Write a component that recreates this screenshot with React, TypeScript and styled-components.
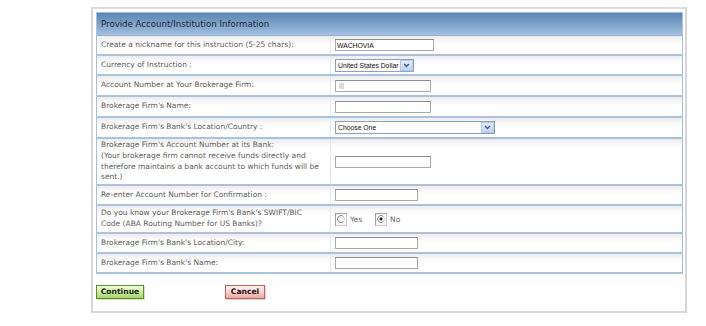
import styled, { createGlobalStyle } from 'styled-components'

const GlobalStyle = createGlobalStyle`
  body {
    margin: 0;
    background: #ffffff;
    font-family: "DejaVu Sans", Verdana, sans-serif;
  }
`

const Page = styled.div`
  width: 706px;
  height: 326px;
  padding: 7px 0 0 91px;
  box-sizing: border-box;
`

const Panel = styled.div`
  width: 596px;
  height: 306px;
  box-sizing: border-box;
  border: 2px solid #d6d6d6;
  border-top-color: #dcdcdc;
  padding: 3px 3px 0 3px;
  background: #ffffff;
`

const FormGrid = styled.div`
  width: 587px;
  box-sizing: border-box;
  border: 1px solid #a7c0dc;
  border-bottom: none;
  font-size: 7.5px;
  color: #5c5c5c;
`

const Header = styled.div`
  height: 23px;
  box-sizing: border-box;
  padding-left: 4px;
  display: flex;
  align-items: center;
  font-size: 8.6px;
  color: #1d2b3d;
  background: linear-gradient(#5a86b4, #8badd1 70%, #a6c2df);
  border-bottom: 1px solid #8fb0d6;
`

const Row = styled.div<{ $h: number }>`
  display: grid;
  grid-template-columns: 234px 1fr;
  height: ${p => p.$h}px;
  box-sizing: border-box;
  border-bottom: 2px solid #a9c2dd;
  background: linear-gradient(#ececec, #fbfbfb 6px, #ffffff 10px);
`

const Label = styled.div`
  padding: 0 9px 0 4px;
  line-height: 10.7px;
  display: flex;
  align-items: center;
  border-right: 1px solid #e2e8ef;
`

const Field = styled.div`
  padding-left: 4px;
  display: flex;
  align-items: center;
`

const TextBox = styled.input<{ $w: number }>`
  display: block;
  width: ${p => p.$w}px;
  height: 12px;
  box-sizing: border-box;
  border: 1px solid #a9a9a9;
  border-top-color: #8e8e8e;
  padding: 0 1px;
  font-family: "Liberation Sans", Arial, sans-serif;
  font-size: 6.8px;
  color: #111111;
  background: #ffffff;
  outline: none;
`

const Masked = styled.span`
  display: block;
  width: 96px;
  height: 12px;
  box-sizing: border-box;
  border: 1px solid #a9a9a9;
  border-top-color: #8e8e8e;
  padding: 2px 3px;
  &::before {
    content: '';
    display: block;
    width: 5px;
    height: 6px;
    background: #dcdcdc;
    filter: blur(0.6px);
  }
`

const SelectBox = styled.div<{ $w: number }>`
  display: flex;
  width: ${p => p.$w}px;
  height: 13px;
  box-sizing: border-box;
  border: 1px solid #8ca2c4;
  background: #ffffff;
  font-family: "Liberation Sans", Arial, sans-serif;
  font-size: 6.8px;
  color: #111111;
`

const SelectValue = styled.span`
  flex: 1;
  padding-left: 2px;
  line-height: 11px;
  white-space: nowrap;
  overflow: hidden;
`

const SelectArrow = styled.span`
  width: 11px;
  display: flex;
  align-items: center;
  justify-content: center;
  border: 1px solid #b5c8e6;
  background: linear-gradient(#e3ecfb, #c3d5f3);
`

const RadioGroup = styled.div`
  display: flex;
  align-items: center;
  font-size: 7.5px;
  color: #666666;
`

const RadioOption = styled.label`
  display: flex;
  align-items: center;
  gap: 3px;
  margin-right: 13px;
`

const RadioBox = styled.span`
  width: 12px;
  height: 13px;
  box-sizing: border-box;
  border: 1px solid #a0a0a0;
  border-right-color: #c8c8c8;
  border-bottom-color: #c8c8c8;
  display: flex;
  align-items: center;
  justify-content: center;
  background: #f7f7f7;
`

const Actions = styled.div`
  display: flex;
  gap: 81px;
  padding: 11px 0 0 0;
`

const Button = styled.button<{ $kind: 'go' | 'stop' }>`
  width: ${p => (p.$kind === 'go' ? 48 : 40)}px;
  height: 14px;
  padding: 0;
  box-sizing: border-box;
  font-family: "DejaVu Sans", Verdana, sans-serif;
  font-weight: bold;
  font-size: 7.6px;
  line-height: 12px;
  cursor: pointer;
  border: 1px solid ${p => (p.$kind === 'go' ? '#5d8f23' : '#c8615b')};
  color: ${p => (p.$kind === 'go' ? '#1a2a0c' : '#2a1010')};
  background: ${p =>
    p.$kind === 'go'
      ? 'linear-gradient(#f3fbe2, #cde9a0 55%, #a6d466)'
      : 'linear-gradient(#fff4f3, #f7cfcc 55%, #eea7a3)'};
  box-shadow: 1px 1px 0 rgba(0, 0, 0, 0.15);
`

const Chevron = () => (
  <svg width="7" height="5" viewBox="0 0 7 5">
    <path d="M1 1 L3.5 3.5 L6 1" fill="none" stroke="#3d5f97" strokeWidth="1.4" />
  </svg>
)

const RadioMark = ({ checked }: { checked?: boolean }) => (
  <svg width="8" height="8" viewBox="0 0 8 8">
    <path d="M6.5 1.5 A3.5 3.5 0 1 0 6.5 6.5" fill="none" stroke="#8a8a8a" strokeWidth="1" />
    <path d="M6.5 1.5 A3.5 3.5 0 0 1 6.5 6.5" fill="none" stroke="#e0e0e0" strokeWidth="1" />
    {checked && <circle cx="4" cy="4" r="1.4" fill="#111111" />}
  </svg>
)

export default function App() {
  return (
    <Page>
      <GlobalStyle />
      <Panel>
        <FormGrid>
          <Header>Provide Account/Institution Information</Header>
          <Row $h={20}>
            <Label>Create a nickname for this instruction (5-25 chars):</Label>
            <Field>
              <TextBox $w={99} defaultValue="WACHOVIA" />
            </Field>
          </Row>
          <Row $h={20}>
            <Label>Currency of Instruction :</Label>
            <Field>
              <SelectBox $w={79}>
                <SelectValue>United States Dollar</SelectValue>
                <SelectArrow><Chevron /></SelectArrow>
              </SelectBox>
            </Field>
          </Row>
          <Row $h={21}>
            <Label>Account Number at Your Brokerage Firm:</Label>
            <Field>
              <Masked />
            </Field>
          </Row>
          <Row $h={21}>
            <Label>Brokerage Firm's Name:</Label>
            <Field>
              <TextBox $w={96} />
            </Field>
          </Row>
          <Row $h={21}>
            <Label>Brokerage Firm's Bank's Location/Country :</Label>
            <Field>
              <SelectBox $w={160}>
                <SelectValue>Choose One</SelectValue>
                <SelectArrow><Chevron /></SelectArrow>
              </SelectBox>
            </Field>
          </Row>
          <Row $h={47}>
            <Label>
              Brokerage Firm's Account Number at its Bank:
              <br />
              (Your brokerage firm cannot receive funds directly and therefore maintains a bank
              account to which funds will be sent.)
            </Label>
            <Field>
              <TextBox $w={96} />
            </Field>
          </Row>
          <Row $h={20}>
            <Label>Re-enter Account Number for Confirmation :</Label>
            <Field>
              <TextBox $w={83} />
            </Field>
          </Row>
          <Row $h={28}>
            <Label>
              Do you know your Brokerage Firm's Bank's SWIFT/BIC Code (ABA Routing Number for US
              Banks)?
            </Label>
            <Field>
              <RadioGroup>
                <RadioOption>
                  <RadioBox><RadioMark /></RadioBox>
                  Yes
                </RadioOption>
                <RadioOption>
                  <RadioBox><RadioMark checked /></RadioBox>
                  No
                </RadioOption>
              </RadioGroup>
            </Field>
          </Row>
          <Row $h={20}>
            <Label>Brokerage Firm's Bank's Location/City:</Label>
            <Field>
              <TextBox $w={83} />
            </Field>
          </Row>
          <Row $h={20}>
            <Label>Brokerage Firm's Bank's Name:</Label>
            <Field>
              <TextBox $w={83} />
            </Field>
          </Row>
        </FormGrid>
        <Actions>
          <Button $kind="go">Continue</Button>
          <Button $kind="stop">Cancel</Button>
        </Actions>
      </Panel>
    </Page>
  )
}
